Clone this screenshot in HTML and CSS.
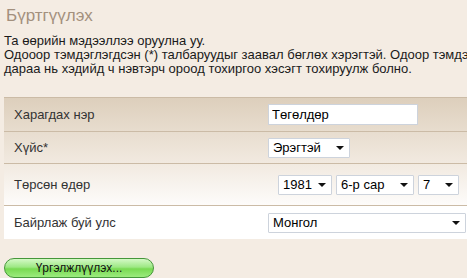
FILE: index.html
```html
<!DOCTYPE html>
<html>
<head>
    <title>Бүртгүүлэх</title>
    <link rel="stylesheet" href="styles.css">
</head>
<body>
    <h2 class="title">Бүртгүүлэх</h2>
    <p class="intro">
        Та өөрийн мэдээллээ оруулна уу.<br>
        Одооор тэмдэглэгдсэн (*) талбаруудыг заавал бөглөх хэрэгтэй. Одоор тэмдэглээгүй<br>
        дараа нь хэдийд ч нэвтэрч ороод тохиргоо хэсэгт тохируулж болно.
    </p>

    <div class="form">
        <div class="row row-1">
            <label class="label">Харагдах нэр</label>
            <div class="field"><input type="text" class="text" value="Төгөлдөр"></div>
        </div>
        <div class="row row-2">
            <label class="label">Хүйс*</label>
            <div class="field">
                <div class="select w-gender"><span>Эрэгтэй</span><i class="arrow"></i></div>
            </div>
        </div>
        <div class="row row-3">
            <label class="label">Төрсөн өдөр</label>
            <div class="field field-date">
                <div class="select w-year"><span>1981</span><i class="arrow"></i></div>
                <div class="select w-month"><span>6-р сар</span><i class="arrow"></i></div>
                <div class="select w-day"><span>7</span><i class="arrow"></i></div>
            </div>
        </div>
        <div class="row row-4">
            <label class="label">Байрлаж буй улс</label>
            <div class="field">
                <div class="select w-country"><span>Монгол</span><i class="arrow"></i></div>
            </div>
        </div>
    </div>

    <button class="next">Үргэлжлүүлэх...</button>
</body>
</html>
```

FILE: styles.css
```css
html {
    overflow: hidden;
}
body {
    margin: 0;
    width: 520px;
    background-color: #f4ece3;
    font-family: 'Liberation Sans', Arial, sans-serif;
    color: #222;
}
.title {
    margin: 0;
    padding: 5px 0 0 6px;
    font-size: 17px;
    font-weight: normal;
    color: #a3907d;
    line-height: 22px;
}
.intro {
    margin: 7px 0 0 0;
    padding-left: 4px;
    font-size: 13px;
    line-height: 14px;
    white-space: nowrap;
    color: #1a1a1a;
}
.form {
    margin: 21px 0 0 4px;
    border-top: 1px solid #cbbba6;
    background: linear-gradient(#ddcfbc, #f1e9df 45%, #fefdfc 78%, #fff);
}
.row {
    display: flex;
    align-items: center;
    border-bottom: 1px solid #cbbba6;
    font-size: 13px;
    color: #333;
}
.row-1 { height: 33px; }
.row-2 { height: 31px; }
.row-3 { height: 41px; }
.row-4 { height: 33px; background: #fff; border-bottom: none; }
.label {
    width: 254px;
    padding-left: 10px;
}
.field {
    display: flex;
    gap: 4px;
}
.field-date {
    padding-left: 10px;
}
.text {
    width: 142px;
    height: 15px;
    padding: 2px 3px;
    border: 1px solid #cdd3dc;
    font-family: 'Liberation Sans', Arial, sans-serif;
    font-size: 13px;
    color: #000;
    background: #fff;
}
.select {
    display: flex;
    align-items: center;
    justify-content: space-between;
    height: 18px;
    padding: 0 5px 0 4px;
    border: 1px solid #cdd3dc;
    border-radius: 1px;
    background: #fff;
    font-size: 13px;
    color: #000;
}
.arrow {
    width: 0;
    height: 0;
    border-left: 4px solid transparent;
    border-right: 4px solid transparent;
    border-top: 4px solid #111;
}
.w-gender { width: 71px; }
.w-year { width: 43px; }
.w-month { width: 67px; }
.w-day { width: 30px; }
.w-country { width: 187px; }
.next {
    display: block;
    margin: 19px 0 0 4px;
    width: 150px;
    height: 20px;
    border: 1px solid #45963a;
    border-radius: 10px;
    background: linear-gradient(#d4f9c6, #9de884 45%, #78da52 55%, #9ceb7e);
    font-family: 'Liberation Sans', Arial, sans-serif;
    font-size: 12px;
    color: #111;
    padding: 0;
}
```
